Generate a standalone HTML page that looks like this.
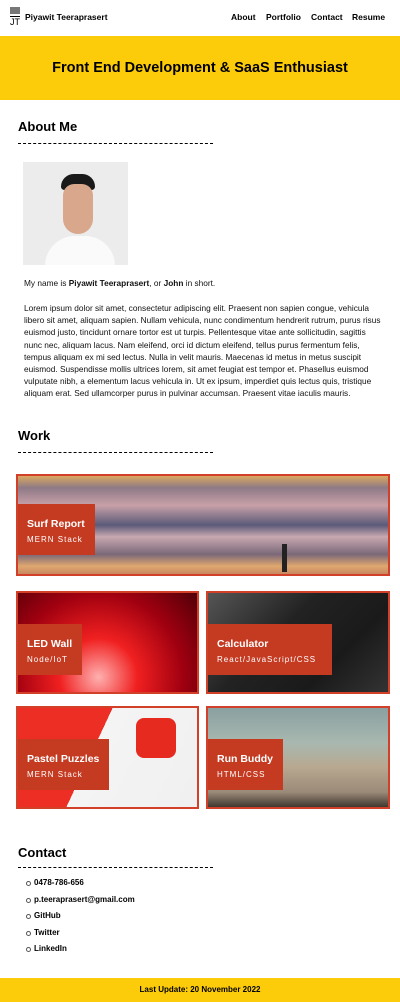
<!DOCTYPE html>
<html><head><meta charset="utf-8"><style>
*{margin:0;padding:0;box-sizing:border-box}
body{width:400px;height:1002px;position:relative;font-family:"Liberation Sans",Arial,sans-serif;color:#000;background:#fff;overflow:hidden}
.a{position:absolute;white-space:nowrap}
.nav{font-size:8.5px;font-weight:bold;top:12px}
h2{position:absolute;left:18px;font-size:13px;font-weight:bold}
.dash{position:absolute;left:18px;width:195px;border-top:1px dashed #000}
.p{position:absolute;left:24px;font-size:8.3px;line-height:12.2px;white-space:nowrap;color:#111}
.card{position:absolute;border:2px solid #d2402a;overflow:hidden}
.lab{position:absolute;left:0;background:#c43b22;color:#fff;padding:0 0 0 9px}
.lab b{display:block;font-size:10.5px;margin-top:14px}
.lab span{display:block;font-size:8px;letter-spacing:1px;margin-top:5px}
ul{position:absolute;left:34px;top:878px;list-style:none;font-size:8px;font-weight:bold}
li{height:16.6px;position:relative}
li:before{content:"";position:absolute;left:-8px;top:3px;width:3px;height:3px;border:1px solid #555;border-radius:50%}
</style></head><body>
<div class="a" style="left:10px;top:7px;width:10px;height:7px;background:#777"></div>
<div class="a" style="left:10px;top:16px;width:10px;border-top:1px solid #000"></div>
<div class="a" style="left:10px;top:17px;font-size:9px">JT</div>
<div class="a" style="left:25px;top:12px;font-size:8.5px;font-weight:bold">Piyawit Teeraprasert</div>
<div class="a nav" style="left:231px">About</div>
<div class="a nav" style="left:266px">Portfolio</div>
<div class="a nav" style="left:311px">Contact</div>
<div class="a nav" style="left:352px">Resume</div>
<div class="a" style="left:0;top:36px;width:400px;height:64px;background:#fccc0a;font-size:14.5px;font-weight:bold;text-align:center;line-height:64px">Front End Development &amp; SaaS Enthusiast</div>
<h2 style="top:119px">About Me</h2><div class="dash" style="top:143px"></div>
<div class="a" style="left:23px;top:162px;width:105px;height:103px;background:#ececec;overflow:hidden">
<div class="a" style="left:22px;top:74px;width:70px;height:40px;background:#fafafa;border-radius:30px 30px 0 0"></div>
<div class="a" style="left:38px;top:12px;width:34px;height:16px;background:#1a1a1a;border-radius:15px 15px 4px 4px"></div>
<div class="a" style="left:40px;top:22px;width:30px;height:50px;background:#d9a88c;border-radius:12px 12px 16px 16px"></div>
</div>
<div class="p" style="top:277px">My name is <b>Piyawit Teeraprasert</b>, or <b>John</b> in short.</div>
<div class="p" style="top:302px">Lorem ipsum dolor sit amet, consectetur adipiscing elit. Praesent non sapien congue, vehicula<br>libero sit amet, aliquam sapien. Nullam vehicula, nunc condimentum hendrerit rutrum, purus risus<br>euismod justo, tincidunt ornare tortor est ut turpis. Pellentesque vitae ante sollicitudin, sagittis<br>nunc nec, aliquam lacus. Nam eleifend, orci id dictum eleifend, tellus purus fermentum felis,<br>tempus aliquam ex mi sed lectus. Nulla in velit mauris. Maecenas id metus in metus suscipit<br>euismod. Suspendisse mollis ultrices lorem, sit amet feugiat est tempor et. Phasellus euismod<br>vulputate nibh, a elementum lacus vehicula in. Ut ex ipsum, imperdiet quis lectus quis, tristique<br>aliquam erat. Sed ullamcorper purus in pulvinar accumsan. Praesent vitae iaculis mauris.</div>
<h2 style="top:428px">Work</h2><div class="dash" style="top:452px"></div>
<div class="card" style="left:16px;top:474px;width:374px;height:102px;background:linear-gradient(180deg,#d9a860 0%,#8e7a86 12%,#c8a0a8 30%,#5a5a78 50%,#c8a8b0 62%,#7a6878 80%,#e0a870 92%,#c88860 100%)">
<div class="lab" style="top:28px;width:77px;height:51px"><b>Surf Report</b><span>MERN Stack</span></div>
<div class="a" style="left:264px;top:68px;width:5px;height:28px;background:#222"></div></div>
<div class="card" style="left:16px;top:591px;width:183px;height:103px;background:radial-gradient(circle at 45% 85%,#ffb0b0,#f02020 30%,#a00010 65%,#500008)">
<div class="lab" style="top:31px;width:64px;height:51px"><b>LED Wall</b><span>Node/IoT</span></div></div>
<div class="card" style="left:206px;top:591px;width:184px;height:103px;background:linear-gradient(135deg,#555 0%,#222 40%,#1a1a1a 70%,#333)">
<div class="lab" style="top:31px;width:124px;height:51px"><b>Calculator</b><span>React/JavaScript/CSS</span></div></div>
<div class="card" style="left:16px;top:706px;width:183px;height:103px;background:linear-gradient(115deg,#ec2e24 0%,#ec2e24 42%,#f4f4f4 42%,#f0f0f0 100%)">
<div class="a" style="left:118px;top:10px;width:40px;height:40px;background:#e62a20;border-radius:8px"></div>
<div class="lab" style="top:31px;width:91px;height:51px"><b>Pastel Puzzles</b><span>MERN Stack</span></div></div>
<div class="card" style="left:206px;top:706px;width:184px;height:103px;background:linear-gradient(180deg,#8aa0a0 0%,#a8b8b0 35%,#b8a890 60%,#9a8a78 85%,#403830)">
<div class="lab" style="top:31px;width:75px;height:51px"><b>Run Buddy</b><span>HTML/CSS</span></div></div>
<h2 style="top:845px">Contact</h2><div class="dash" style="top:867px"></div>
<ul><li>0478-786-656</li><li>p.teeraprasert@gmail.com</li><li>GitHub</li><li>Twitter</li><li>LinkedIn</li></ul>
<div class="a" style="left:0;top:978px;width:400px;height:24px;background:#fccc0a;font-size:8px;font-weight:bold;text-align:center;line-height:24px">Last Update: 20 November 2022</div>
</body></html>
